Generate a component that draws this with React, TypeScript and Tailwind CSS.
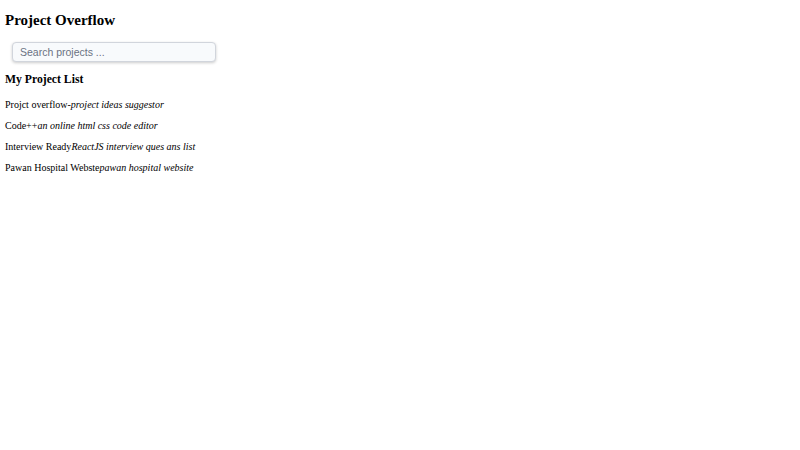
import React from "react";

const projects = [
  { name: "Projct overflow-", desc: "project ideas suggestor" },
  { name: "Code++", desc: "an online html css code editor" },
  { name: "Interview Ready", desc: "ReactJS interview ques ans list" },
  { name: "Pawan Hospital Webste", desc: "pawan hospital website" },
];

export default function App() {
  return (
    <div className="min-h-[450px] w-[800px] bg-white px-[5px] pt-[10px] text-black" style={{ fontFamily: '"Liberation Serif", serif' }}>
      <h1 className="text-[15px] font-bold leading-[20px]">Project Overflow</h1>
      <div className="mt-[12px] flex pl-[7px]">
        <input
          placeholder="Search projects ..."
          className="block h-[20px] w-[204px] rounded-[4px] border border-gray-300 bg-[#f8fafc] px-[7px] text-[10.5px] shadow-[0_1px_3px_rgba(0,0,0,0.2)] outline-none placeholder:text-gray-500"
          style={{ fontFamily: '"Liberation Sans", Arial, sans-serif' }}
        />
      </div>
      <h2 className="mt-[11px] text-[11.7px] font-bold leading-[14px]">My Project List</h2>
      <div className="mt-[6.5px] flex flex-col">
        {projects.map((p) => (
          <div key={p.name} className="h-[21.3px] text-[10px] leading-[21px]">
            {p.name}
            <i>{p.desc}</i>
          </div>
        ))}
      </div>
    </div>
  );
}
